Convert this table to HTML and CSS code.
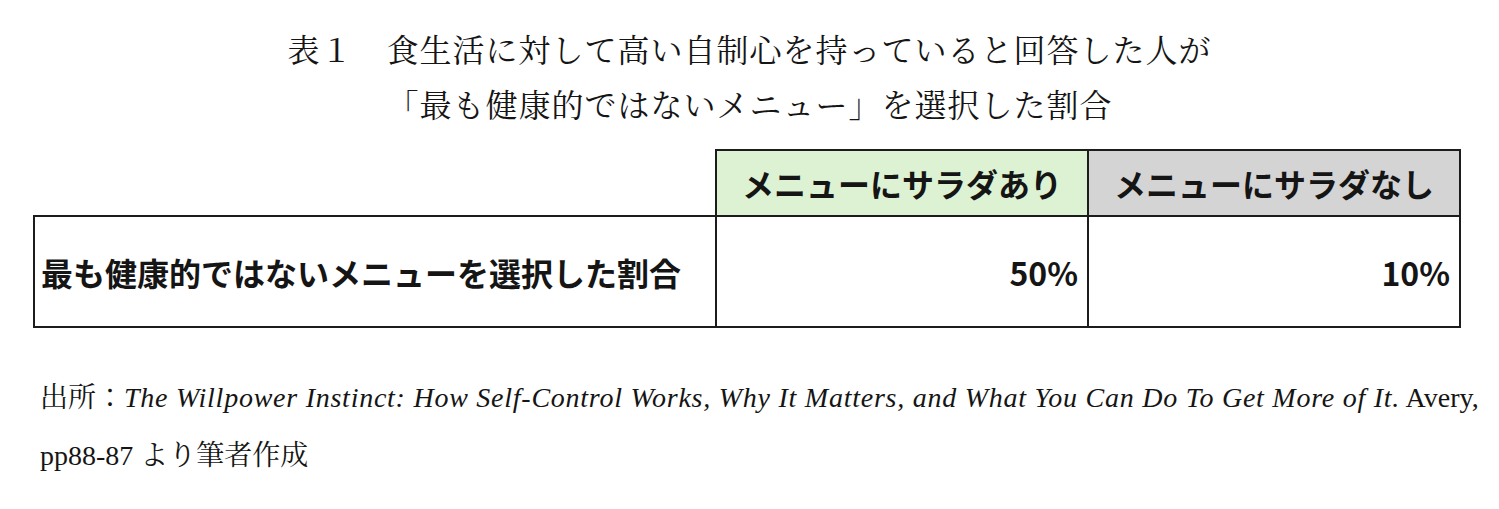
FILE: index.html
```html
<!DOCTYPE html>
<html lang="ja">
<head>
<meta charset="utf-8">
<title>表１</title>
<link rel="stylesheet" href="styles.css">
</head>
<body>
<div class="page">
  <h1 class="title">
    <span class="title-line">表１　食生活に対して高い自制心を持っていると回答した人が</span>
    <span class="title-line">「最も健康的ではないメニュー」を選択した割合</span>
  </h1>
  <table class="data">
    <colgroup>
      <col class="c-label">
      <col class="c-val">
      <col class="c-val">
    </colgroup>
    <thead>
      <tr class="head-row">
        <th class="blank"></th>
        <th class="h-green">メニューにサラダあり</th>
        <th class="h-gray">メニューにサラダなし</th>
      </tr>
    </thead>
    <tbody>
      <tr class="body-row">
        <td class="label">最も健康的ではないメニューを選択した割合</td>
        <td class="num">50%</td>
        <td class="num">10%</td>
      </tr>
    </tbody>
  </table>
  <p class="source">
    <span class="src-line1">出所：<i class="book">The Willpower Instinct: How Self-Control Works, Why It Matters, and What You Can Do To Get More of It.</i> Avery,</span>
    <span class="src-line2">pp88-87 より筆者作成</span>
  </p>
</div>
</body>
</html>
```
FILE: styles.css
```css
html, body {
  margin: 0;
  padding: 0;
  background: #ffffff;
}

.page {
  width: 1499px;
  color: #151515;
}

.title {
  margin: 24px 0 0 0;
  font-family: "Liberation Serif", "Noto Serif CJK JP", "Noto Sans CJK JP", serif;
  font-weight: 400;
  font-size: 32px;
  line-height: 55px;
  letter-spacing: 1px;
  text-align: center;
}

.title-line {
  display: block;
  white-space: nowrap;
}

.data {
  margin: 15px 0 0 33px;
  border-collapse: collapse;
  table-layout: fixed;
  width: 1426px;
  font-family: "Noto Sans CJK JP", sans-serif;
  font-weight: 700;
  font-size: 32px;
}

.c-label { width: 682px; }
.c-val { width: 372px; }

.data th,
.data td {
  border: 2px solid #1c1c1c;
  padding: 0;
  white-space: nowrap;
}

.data th.blank {
  border: none;
  background: transparent;
}

.head-row { height: 66px; }

.h-green,
.h-gray {
  text-align: center;
  font-weight: 700;
  vertical-align: middle;
}

.h-green { background: #dcf2d3; }
.h-gray { background: #d4d4d4; }

.body-row { height: 111px; }

.label {
  text-align: left;
  padding-left: 6px !important;
  vertical-align: middle;
}

.num {
  text-align: right;
  padding-right: 9px !important;
  vertical-align: middle;
}

.source {
  margin: 41px 0 0 40px;
  font-family: "Liberation Serif", "Noto Serif CJK JP", "Noto Sans CJK JP", serif;
  font-size: 28px;
  line-height: 58px;
}

.src-line1,
.src-line2 {
  display: block;
  white-space: nowrap;
}

.book {
  font-style: italic;
  letter-spacing: 0.75px;
}
```
